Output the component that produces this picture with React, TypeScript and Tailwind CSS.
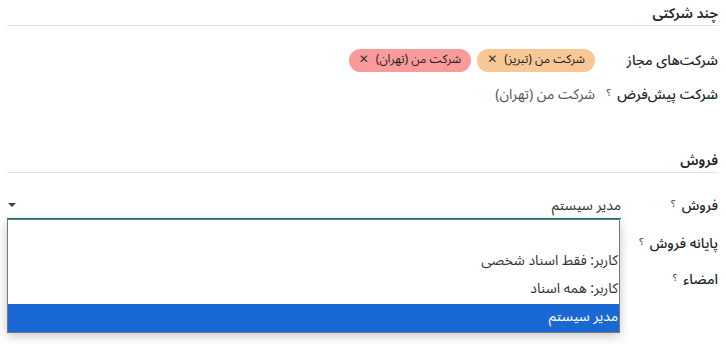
import React from 'react';

const font = { fontFamily: '"Noto Sans Arabic", "Noto Sans", "DejaVu Sans", sans-serif' };

function Help() {
  return <sup className="text-[10px] text-[#555] mr-[6px] relative -top-[3px]">؟</sup>;
}

function Tag({ label, tone }: { label: string; tone: 'orange' | 'red' }) {
  return (
    <span
      className={`inline-flex items-center h-[23px] px-[10px] gap-[7px] rounded-full text-[12px] text-[#222] ${
        tone === 'orange' ? 'bg-[#f7c796]' : 'bg-[#f99b9b]'
      }`}
    >
      {label}
      <span className="text-[12px] leading-none font-bold text-[#333]">✕</span>
    </span>
  );
}

export default function App() {
  const options = ['', 'کاربر: فقط اسناد شخصی', 'کاربر: همه اسناد', 'مدیر سیستم'];

  return (
    <div dir="rtl" style={font} className="relative w-[726px] h-[344px] bg-white overflow-hidden pr-[8px] pl-[7px] text-[#212529]">
      {/* multi company */}
      <div className="h-[26px] pt-[3px] border-b border-[#e3e3e3] text-[14px] leading-[22px] font-semibold">چند شرکتی</div>
      <div className="mt-[17px]">
        <div className="flex items-center h-[34px]">
          <div className="w-[123px] shrink-0 text-[14px] font-medium">شرکت‌های مجاز</div>
          <div className="flex gap-[6px]">
            <Tag label="شرکت من (تبریز)" tone="orange" />
            <Tag label="شرکت من (تهران)" tone="red" />
          </div>
        </div>
        <div className="flex items-center h-[34px]">
          <div className="w-[123px] shrink-0 text-[14px] font-medium">
            شرکت پیش‌فرض
            <Help />
          </div>
          <div className="text-[14px] text-[#555]">شرکت من (تهران)</div>
        </div>
      </div>

      {/* sales */}
      <div className="mt-[36px] h-[26px] pt-[3px] border-b border-[#e3e3e3] text-[14px] leading-[22px] font-semibold">فروش</div>
      <div className="mt-[14px]">
        <div className="flex items-center h-[37px]">
          <div className="w-[97px] shrink-0 text-[14px] font-medium">
            فروش
            <Help />
          </div>
          <div className="flex-1 flex items-center justify-between h-[27px] border-b border-[#017e84] text-[14px] text-[#333]">
            <span>مدیر سیستم</span>
            <span className="ml-[1px] w-0 h-0 border-l-[4px] border-r-[4px] border-t-[4px] border-l-transparent border-r-transparent border-t-[#374151]" />
          </div>
        </div>
        <div className="flex items-center h-[38px]">
          <div className="w-[97px] shrink-0 text-[14px] font-medium">
            پایانه فروش
            <Help />
          </div>
        </div>
        <div className="flex items-center h-[35px]">
          <div className="w-[97px] shrink-0 text-[14px] font-medium">
            امضاء
            <Help />
          </div>
        </div>
      </div>

      {/* open select list */}
      <div className="absolute top-[219px] left-[7px] w-[613px] border border-[#767676] bg-white shadow-[0_3px_10px_rgba(0,0,0,0.22)]">
        {options.map((o, i) => (
          <div
            key={i}
            className={`h-[28px] flex items-center pr-[1px] text-[14px] leading-[20px] pb-[2px] ${
              i === options.length - 1 ? 'bg-[#1a68d4] text-white' : 'text-[#333]'
            }`}
          >
            {o}
          </div>
        ))}
      </div>
    </div>
  );
}
